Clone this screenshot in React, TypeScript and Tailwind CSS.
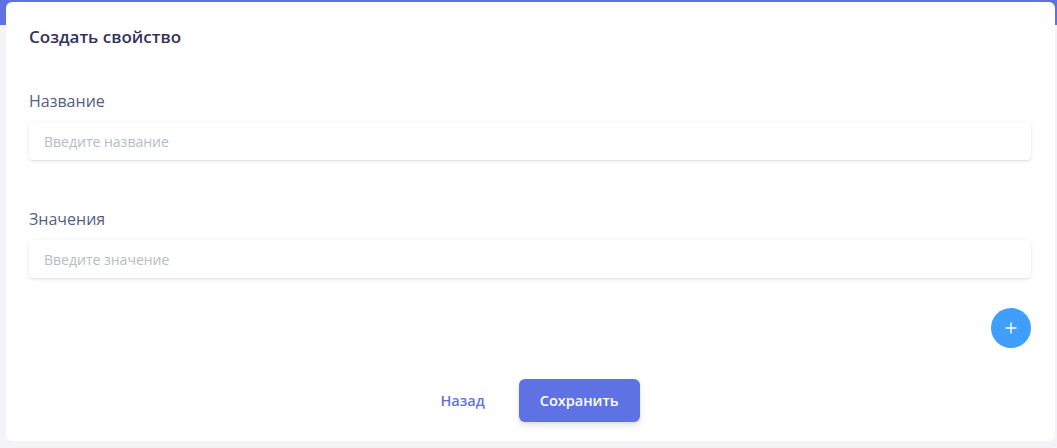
import React from 'react';

function Field({ label, placeholder, labelGap }: { label: string; placeholder: string; labelGap: string }) {
  return (
    <div className={labelGap}>
      <label className="block text-[16px] leading-[22px] text-[#525f7f]">{label}</label>
      <input
        type="text"
        placeholder={placeholder}
        className="mt-[10px] block w-full h-[38px] rounded-[4px] bg-white px-[15px] text-[14px] text-[#525f7f] placeholder:text-[#b6bcc6] outline-none shadow-[0_1px_3px_rgba(50,50,93,0.15),0_1px_0_rgba(0,0,0,0.02)]"
      />
    </div>
  );
}

export default function App() {
  return (
    <div
      className="relative w-full h-[448px] bg-[#f3f3f8] overflow-hidden"
      style={{ fontFamily: '"Open Sans", "Noto Sans", sans-serif' }}
    >
      {/* blue header behind the card */}
      <div className="absolute inset-x-0 top-0 h-[25px] bg-[#5e72e4]" />

      <div className="relative ml-[6px] mr-[2px] mt-[2px] h-[439px] rounded-[6px] bg-white pl-[23px] pr-[24px] pt-[23px]">
        <h3 className="text-[17px] leading-[24px] font-semibold text-[#32325d]">Создать свойство</h3>

        <Field label="Название" placeholder="Введите название" labelGap="mt-[41px]" />
        <Field label="Значения" placeholder="Введите значение" labelGap="mt-[48px]" />

        <div className="mt-[30px] flex justify-end">
          <button className="w-[40px] h-[40px] rounded-full bg-[#409eff] flex items-center justify-center">
            <svg width="12" height="12" viewBox="0 0 12 12" fill="none" stroke="white" strokeWidth="1.4">
              <path d="M6 0.5v11M0.5 6h11" />
            </svg>
          </button>
        </div>

        <div className="mt-[31px] flex justify-center gap-[14px]">
          <button className="h-[43px] px-5 text-[14.5px] font-semibold text-[#5e72e4]">Назад</button>
          <button className="h-[43px] px-[21px] rounded-[6px] bg-[#5e72e4] text-[14.5px] font-semibold text-white shadow-[0_4px_6px_rgba(50,50,93,0.11),0_1px_3px_rgba(0,0,0,0.08)]">
            Сохранить
          </button>
        </div>
      </div>
    </div>
  );
}
